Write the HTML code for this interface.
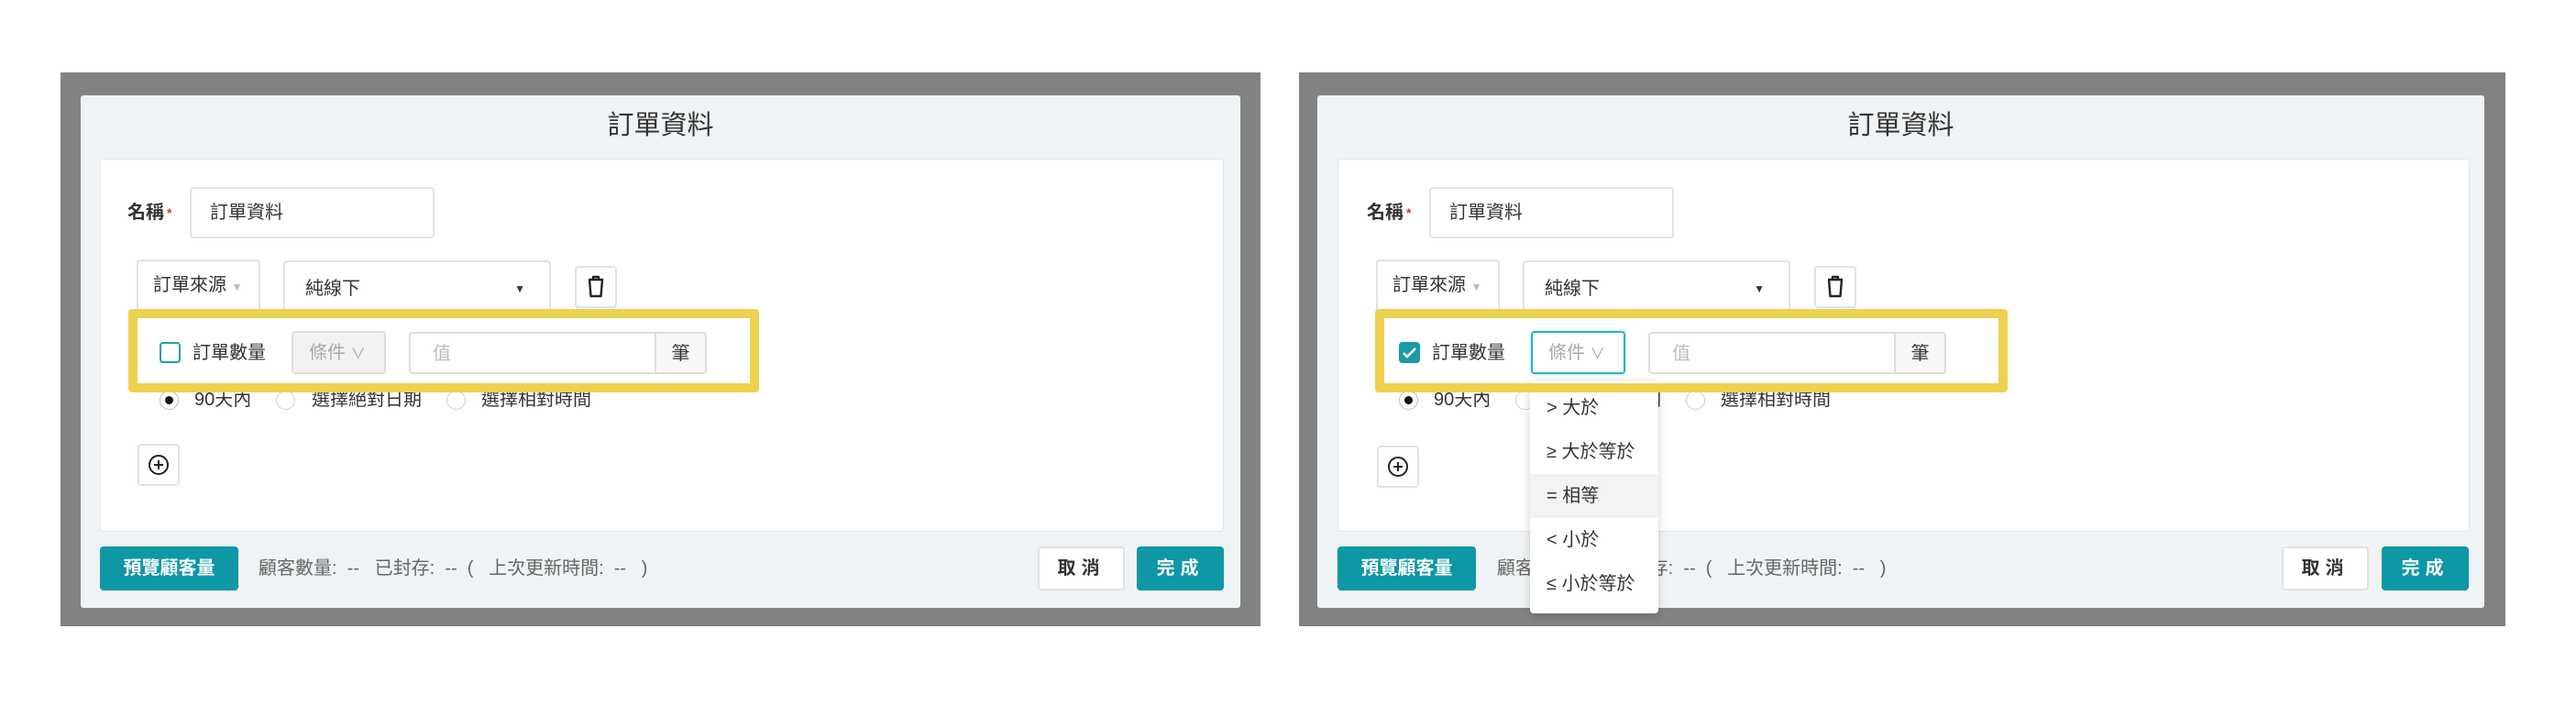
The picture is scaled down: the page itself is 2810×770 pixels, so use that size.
<!DOCTYPE html>
<html><head><meta charset="utf-8"><style>
*{box-sizing:border-box;margin:0;padding:0}
body{width:2810px;height:770px;background:#fff;position:relative;overflow:hidden;font-family:"Liberation Sans","Noto Sans CJK TC",sans-serif;color:#333}
.p{position:absolute;top:0;width:1400px;height:770px}
.a{position:absolute}
.grey{left:66px;top:79px;width:1309px;height:604px;background:#828282}
.modal{left:88px;top:104px;width:1265px;height:559px;background:#f0f3f5;border-radius:3px}
.title{left:88px;top:112px;width:1265px;text-align:center;font-size:29px;color:#333;line-height:50px}
.card{left:109px;top:173px;width:1226px;height:407px;background:#fff;border:1px solid #e1e4e8;border-radius:4px}
.box{background:#fff;border:2px solid #e2e2e2;border-radius:4px}
.t20{font-size:20px;line-height:24px}
.btn{background:#0e97a5;color:#fff;border-radius:4px;font-size:20px;font-weight:bold;text-align:center}
.yellow{left:140px;top:337px;width:688px;height:91px;border:10px solid #edd250;border-radius:4px}
.radio{width:21px;height:21px;border-radius:50%;border:1.5px solid #ccc;background:#fff}
.dd{background:#fff;box-shadow:0 2px 10px rgba(0,0,0,.18);border-radius:4px}
.dd div{height:48px;line-height:48px;padding-left:18px;font-size:20px;color:#333}
</style></head><body>

<!-- LEFT -->
<div class="p" style="left:0">
<div class="a grey"></div>
<div class="a modal"></div>
<div class="a title">訂單資料</div>
<div class="a card"></div>
<div class="a t20" style="left:139px;top:220px;font-weight:bold">名稱<span style="color:#d33;font-size:14px;vertical-align:top;margin-left:3px">*</span></div>
<div class="a box t20" style="left:207px;top:204px;width:267px;height:56px;padding:14px 20px">訂單資料</div>
<div class="a box t20" style="left:149px;top:283px;width:135px;height:60px;padding:14px 16px;border-bottom:none">訂單來源 <span style="color:#bbb;font-size:12px">▼</span></div>
<div class="a box t20" style="left:309px;top:284px;width:292px;height:60px;padding:17px 22px;border-bottom:none">純線下<span style="position:absolute;right:26px;top:17px;font-size:12px">▼</span></div>
<div class="a box" style="left:627px;top:290px;width:46px;height:46px">
<svg width="42" height="42" viewBox="0 0 42 42"><path d="M13 13h16M18 13v-3h6v3M14 13l1.5 18h11L28 13" fill="none" stroke="#222" stroke-width="2.4" stroke-linejoin="round"/></svg></div>
<div class="a" style="left:174px;top:373px;width:23px;height:23px;border:2px solid #1aa0ad;border-radius:4px;background:#fff"></div>
<div class="a t20" style="left:210px;top:373px">訂單數量</div>
<div class="a t20" style="left:318px;top:361px;width:103px;height:47px;background:#f2f2f2;border:2px solid #ddd;border-radius:4px;padding:10px 0 0 17px;color:#aaa">條件 <span style="font-size:16px">∨</span></div>
<div class="a t20" style="left:446px;top:362px;width:270px;height:46px;border:2px solid #ddd;border-radius:4px 0 0 4px;padding:10px 24px;color:#bbb">值</div>
<div class="a t20" style="left:714px;top:362px;width:57px;height:46px;border:2px solid #ddd;border-radius:0 4px 4px 0;background:#f8f8f8;padding:10px 0;text-align:center">筆</div>
<div class="a radio" style="left:174px;top:426px;border-color:#bbb"><div style="width:9px;height:9px;background:#111;border-radius:50%;margin:4.5px"></div></div>
<div class="a t20" style="left:212px;top:424px">90天內</div>
<div class="a radio" style="left:301px;top:426px"></div>
<div class="a t20" style="left:340px;top:424px">選擇絕對日期</div>
<div class="a radio" style="left:487px;top:426px"></div>
<div class="a t20" style="left:525px;top:424px">選擇相對時間</div>
<div class="a box" style="left:150px;top:484px;width:46px;height:46px">
<svg width="42" height="42" viewBox="0 0 42 42"><circle cx="21" cy="21" r="10" fill="none" stroke="#222" stroke-width="2"/><path d="M21 16v10M16 21h10" stroke="#222" stroke-width="2"/></svg></div>
<div class="a yellow"></div>
<div class="a btn" style="left:109px;top:596px;width:151px;height:48px;line-height:48px">預覽顧客量</div>
<div class="a t20" style="left:282px;top:608px;color:#666;white-space:pre">顧客數量:  --   已封存:  --  (   上次更新時間:  --   )</div>
<div class="a box t20" style="left:1132px;top:596px;width:95px;height:48px;line-height:44px;text-align:center;letter-spacing:6px;font-weight:bold;background:#fff">取消</div>
<div class="a btn" style="left:1240px;top:596px;width:95px;height:48px;line-height:48px;letter-spacing:6px">完成</div>
</div>

<!-- RIGHT -->
<div class="p" style="left:1352px">
<div class="a grey" style="left:65px;width:1316px"></div>
<div class="a modal" style="left:85px;width:1273px"></div>
<div class="a title" style="left:85px;width:1273px">訂單資料</div>
<div class="a card" style="left:107px;width:1235px"></div>
<div class="a t20" style="left:139px;top:220px;font-weight:bold">名稱<span style="color:#d33;font-size:14px;vertical-align:top;margin-left:3px">*</span></div>
<div class="a box t20" style="left:207px;top:204px;width:267px;height:56px;padding:14px 20px">訂單資料</div>
<div class="a box t20" style="left:149px;top:283px;width:135px;height:60px;padding:14px 16px;border-bottom:none">訂單來源 <span style="color:#bbb;font-size:12px">▼</span></div>
<div class="a box t20" style="left:309px;top:284px;width:292px;height:60px;padding:17px 22px;border-bottom:none">純線下<span style="position:absolute;right:26px;top:17px;font-size:12px">▼</span></div>
<div class="a box" style="left:627px;top:290px;width:46px;height:46px">
<svg width="42" height="42" viewBox="0 0 42 42"><path d="M13 13h16M18 13v-3h6v3M14 13l1.5 18h11L28 13" fill="none" stroke="#222" stroke-width="2.4" stroke-linejoin="round"/></svg></div>
<div class="a" style="left:174px;top:373px;width:23px;height:23px;background:#1a9aa8;border-radius:4px">
<svg width="23" height="23" viewBox="0 0 23 23"><path d="M5 12l4 4 9-9" fill="none" stroke="#fff" stroke-width="2.6"/></svg></div>
<div class="a t20" style="left:210px;top:373px">訂單數量</div>
<div class="a radio" style="left:174px;top:426px;border-color:#bbb"><div style="width:9px;height:9px;background:#111;border-radius:50%;margin:4.5px"></div></div>
<div class="a t20" style="left:212px;top:424px">90天內</div>
<div class="a radio" style="left:301px;top:426px"></div>
<div class="a t20" style="left:340px;top:424px">選擇絕對日期</div>
<div class="a radio" style="left:487px;top:426px"></div>
<div class="a t20" style="left:525px;top:424px">選擇相對時間</div>
<div class="a box" style="left:150px;top:486px;width:46px;height:46px">
<svg width="42" height="42" viewBox="0 0 42 42"><circle cx="21" cy="21" r="10" fill="none" stroke="#222" stroke-width="2"/><path d="M21 16v10M16 21h10" stroke="#222" stroke-width="2"/></svg></div>
<div class="a btn" style="left:107px;top:596px;width:151px;height:48px;line-height:48px">預覽顧客量</div>
<div class="a t20" style="left:281px;top:608px;color:#666;white-space:pre">顧客數量:  --   已封存:  --  (   上次更新時間:  --   )</div>
<div class="a box t20" style="left:1137px;top:596px;width:95px;height:48px;line-height:44px;text-align:center;letter-spacing:6px;font-weight:bold;background:#fff">取消</div>
<div class="a btn" style="left:1246px;top:596px;width:95px;height:48px;line-height:48px;letter-spacing:6px">完成</div>
<div class="a dd" style="left:317px;top:415px;width:140px;height:254px;padding-top:6px">
<div>&gt; 大於</div><div>≥ 大於等於</div><div style="background:#f3f3f3">= 相等</div><div>&lt; 小於</div><div>≤ 小於等於</div>
</div>
<div class="a t20" style="left:318px;top:361px;width:103px;height:47px;background:#fff;border:2px solid #2bb3bf;border-radius:4px;padding:10px 0 0 17px;color:#aaa;box-shadow:0 0 3px #9dd">條件 <span style="font-size:16px">∨</span></div>
<div class="a t20" style="left:446px;top:362px;width:270px;height:46px;border:2px solid #ddd;border-radius:4px 0 0 4px;padding:10px 24px;color:#bbb">值</div>
<div class="a t20" style="left:714px;top:362px;width:57px;height:46px;border:2px solid #ddd;border-radius:0 4px 4px 0;background:#f8f8f8;padding:10px 0;text-align:center">筆</div>
<div class="a yellow" style="left:148px;width:690px"></div>
</div>
</body></html>
